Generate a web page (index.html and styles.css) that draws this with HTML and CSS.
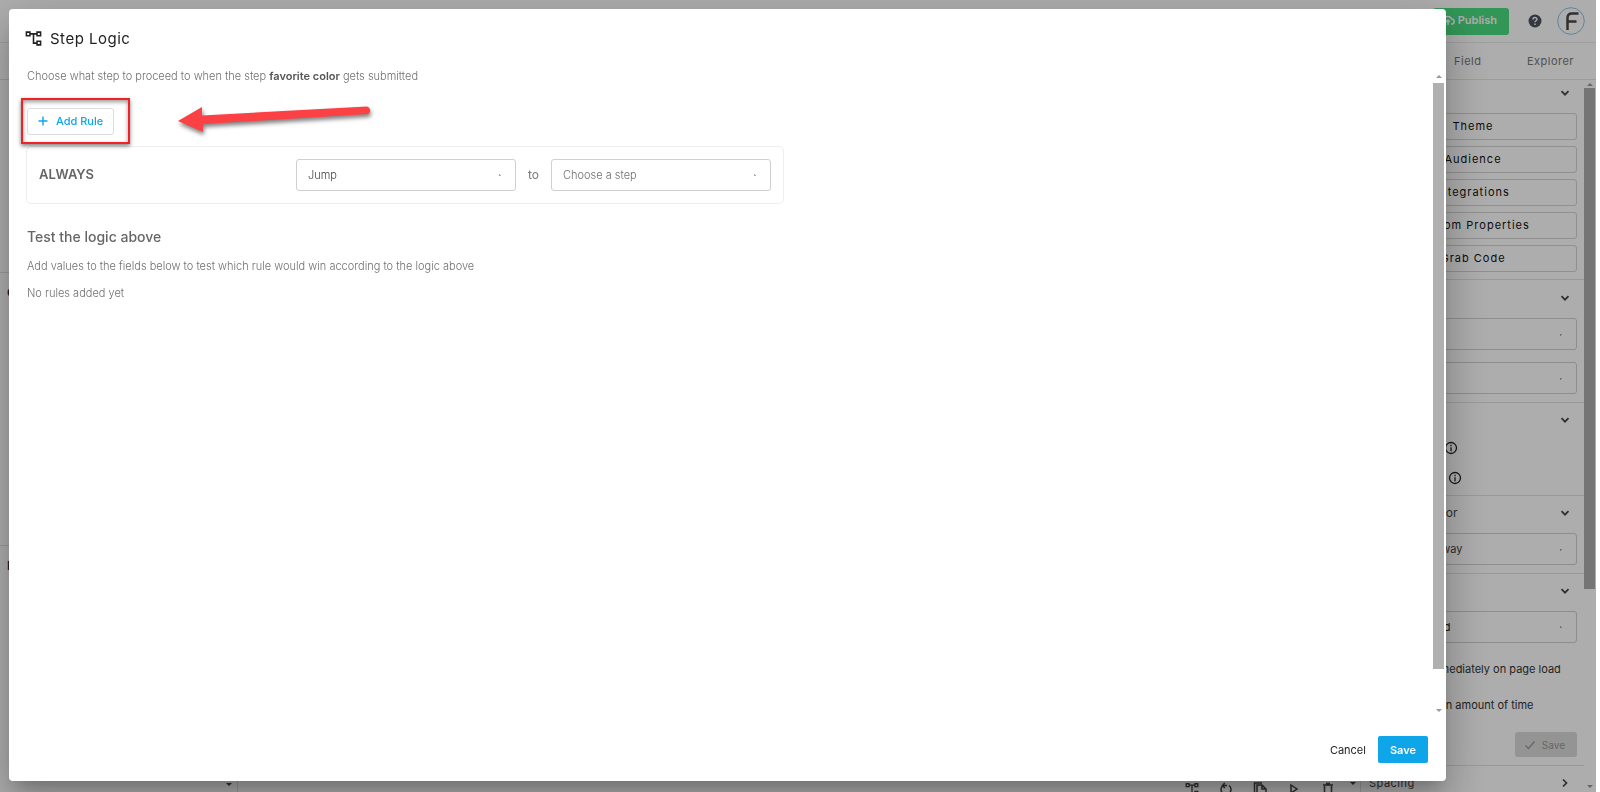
FILE: index.html
```html
<!DOCTYPE html>
<html lang="en">
<head>
<meta charset="utf-8">
<title>Step Logic</title>
<link rel="stylesheet" href="styles.css">
</head>
<body>
<svg class="sprite" aria-hidden="true">
  <symbol id="tree" viewBox="0 0 24 24"><path fill="none" stroke="currentColor" stroke-width="2.2" d="M2 3h5v5H2zM17 3h5v5h-5zM17 16h5v5h-5zM7 5.500h10M12 5.500v13h5"/></symbol>
  <symbol id="down" viewBox="0 0 12 12"><path fill="none" stroke="currentColor" stroke-width="1.700" d="M2.500 4.200l3.500 3.500 3.500-3.500"/></symbol>
  <symbol id="right" viewBox="0 0 12 12"><path fill="none" stroke="currentColor" stroke-width="1.700" d="M4 2.500l3.500 3.500L4 9.500"/></symbol>
  <symbol id="info" viewBox="0 0 14 14"><circle cx="7" cy="7" r="5.500" fill="none" stroke="currentColor" stroke-width="1.300"/><path stroke="currentColor" stroke-width="1.300" d="M7 6.300v4M7 3.800v1.400"/></symbol>
</svg>

<div class="app">
  <header class="topbar">
    <button class="publish" type="button">
      <svg width="14" height="12" viewBox="0 0 14 12"><path fill="none" stroke="currentColor" stroke-width="1.500" d="M4 10H3.500a2.500 2.500 0 0 1-.2-5A3.800 3.800 0 0 1 10.500 5a2.500 2.500 0 0 1 .3 5H10M7 11V6M5 8l2-2 2 2"/></svg>
      Publish
    </button>
    <svg class="help" width="14" height="14" viewBox="0 0 14 14"><circle cx="7" cy="7" r="6.500" fill="#4e5160"/><path fill="none" stroke="#fff" stroke-width="1.400" d="M5 5.500c0-2.600 4-2.500 4-.2 0 1.500-2 1.500-2 3M7 9.600V11"/></svg>
    <svg class="avatar" width="28" height="28" viewBox="0 0 28 28"><circle cx="14" cy="14" r="13.300" fill="none" stroke="#8fc4e8"/><path fill="none" stroke="#484848" stroke-width="2.500" d="M21.500 6.500H15c-3 0-4.500 1.500-4.500 4.500v12M10.500 14.500h9"/></svg>
  </header>

  <div class="workspace">
    <main class="canvas">
      <section class="lane lane-head"></section>
      <section class="lane">
      </section>
      <section class="lane"><h3 class="lane-title">G</h3></section>
      <section class="lane lane-last"><h3 class="lane-title">N</h3></section>
      <footer class="strip">
        <div class="strip-left"><i class="tri tri-down"></i></div>
        <div class="tools">
          <div class="tool-icons">
            <svg width="14" height="14"><use href="#tree"/></svg>
            <svg width="14" height="14" viewBox="0 0 14 14"><path fill="none" stroke="currentColor" stroke-width="1.500" d="M4 3.500a5 5 0 1 0 6 0M4 3.500h4M5.800 1L3.500 3.500 5.800 6"/></svg>
            <svg width="14" height="14" viewBox="0 0 14 14"><path fill="none" stroke="currentColor" stroke-width="1.500" d="M4 3h5l4 4v7H4zM9 3v4h4M1.500 12V1H9"/></svg>
            <svg width="14" height="14" viewBox="0 0 14 14"><path fill="none" stroke="currentColor" stroke-width="1.500" d="M4 3l6 4-6 4z"/></svg>
            <svg width="14" height="14" viewBox="0 0 14 14"><path fill="none" stroke="currentColor" stroke-width="1.500" d="M3.500 4v9h7V4M2 3h10M5 1.500h4"/></svg>
          </div>
          <i class="tri tri-down"></i>
        </div>
      </footer>
    </main>

    <aside class="sidebar">
      <nav class="tabs"><a class="tab" href="#">Step</a><a class="tab" href="#">Field</a><a class="tab" href="#">Explorer</a></nav>
      <div class="side-scroll">
        <div class="sections">
          <section class="section">
            <h4 class="section-head">Options<svg width="12" height="12"><use href="#down"/></svg></h4>
            <div class="stack">
              <button class="wide" type="button">Theme</button>
              <button class="wide" type="button">Audience</button>
              <button class="wide" type="button">Integrations</button>
              <button class="wide" type="button">Custom Properties</button>
              <button class="wide" type="button">Grab Code</button>
            </div>
          </section>
          <section class="section">
            <h4 class="section-head">Type<svg width="12" height="12"><use href="#down"/></svg></h4>
            <div class="stack stack-loose">
              <select class="select" aria-label="Type"><option></option></select>
              <select class="select" aria-label="Position"><option></option></select>
            </div>
          </section>
          <section class="section section-info">
            <h4 class="section-head">Settings<svg width="12" height="12"><use href="#down"/></svg></h4>
            <p class="info-row info-short"><svg width="14" height="14"><use href="#info"/></svg></p>
            <p class="info-row"><svg width="14" height="14"><use href="#info"/></svg></p>
          </section>
          <section class="section">
            <h4 class="section-head">Close Behavior<svg width="12" height="12"><use href="#down"/></svg></h4>
            <select class="select" aria-label="Close Behavior"><option>Hide right away</option></select>
          </section>
          <section class="section section-trigger">
            <h4 class="section-head">Trigger<svg width="12" height="12"><use href="#down"/></svg></h4>
            <select class="select" aria-label="Trigger"><option>On page load</option></select>
            <label class="radio"><input type="radio" name="when" checked>Immediately on page load</label>
            <label class="radio"><input type="radio" name="when">In an amount of time</label>
            <button class="side-save" type="button" disabled><svg width="12" height="12" viewBox="0 0 12 12"><path fill="none" stroke="currentColor" stroke-width="1.300" d="M1.500 6.500l3 3 6-7"/></svg>Save</button>
          </section>
          <section class="section section-spacing">
            <h4 class="section-head">Spacing<svg width="12" height="12"><use href="#right"/></svg></h4>
          </section>
        </div>
        <div class="bar bar-dark"><i class="tri tri-up"></i><i class="thumb"></i><i class="tri tri-down"></i></div>
      </div>
    </aside>
  </div>
</div>

<div class="scrim"></div>

<div class="modal" role="dialog" aria-labelledby="title">
  <header class="modal-head">
    <svg width="17" height="17"><use href="#tree"/></svg>
    <h1 class="modal-title" id="title">Step Logic</h1>
  </header>
  <div class="modal-body">
    <div class="content">
      <p class="text">Choose what step to proceed to when the step <strong>favorite color</strong> gets submitted</p>
      <div class="callout">
        <button class="add-rule" type="button"><svg width="10" height="10" viewBox="0 0 10 10"><path stroke="currentColor" stroke-width="1.400" d="M5 0.500v9M.5 5h9"/></svg>Add Rule</button>
        <i class="callout-box"></i>
        <svg class="callout-arrow" width="210" height="44" viewBox="0 0 210 44"><path fill="#fb4143" d="M7 19L31 5V13.500L196 4.500A4 4 0 0 1 197 12L32 22V30z"/></svg>
      </div>
      <div class="rule">
        <span class="rule-name">ALWAYS</span>
        <select class="select" aria-label="Action"><option>Jump</option></select>
        <span class="rule-to">to</span>
        <select class="select select-empty" aria-label="Step"><option>Choose a step</option></select>
      </div>
      <h2 class="subtitle">Test the logic above</h2>
      <p class="text">Add values to the fields below to test which rule would win according to the logic above</p>
      <p class="text text-next">No rules added yet</p>
    </div>
    <div class="bar bar-light"><i class="tri tri-up"></i><i class="thumb"></i><i class="tri tri-down"></i></div>
  </div>
  <footer class="modal-foot">
    <button class="cancel" type="button">Cancel</button>
    <button class="save" type="button">Save</button>
  </footer>
</div>
</body>
</html>
```
FILE: styles.css
```css
* { box-sizing: border-box; }
html, body { height: 100%; }
body {
  margin: 0;
  overflow: hidden;
  background: #fff;
  color: #222;
  font-family: Inter, "Liberation Sans", sans-serif;
  font-size: 11px;
}
h1, h2, h3, h4, p { margin: 0; font-weight: 400; }
button, select, input { font: inherit; color: inherit; margin: 0; }
svg { display: block; flex: none; }
.sprite { position: absolute; width: 0; height: 0; }

/* page behind the dialog */
.app { display: flex; flex-direction: column; height: 100vh; margin-right: 4px; overflow: hidden; }
.topbar { display: flex; flex: none; align-items: center; height: 43px; padding: 0 11px 0 0; justify-content: flex-end; border-bottom: 1px solid #eaeaea; }
.publish { display: flex; align-items: center; gap: 3px; height: 27px; padding: 0 12px 2px 8px; margin-right: 19px; border: 0; border-radius: 3px; background: #4ade80; color: #fff; font-weight: 600; }
.help { margin-right: 15px; }
.workspace { display: flex; flex: 1; min-height: 0; }
.canvas { display: flex; flex: 1; flex-direction: column; min-width: 0; }
.lane { flex: none; height: 273px; padding: 12px 0 0 7px; border-bottom: 1px solid #e2e2e2; }
.lane-head { height: 37px; }
.lane-head + .lane { height: 193px; }
.lane-last { flex: 1; border: 0; }
.lane-title { font-size: 12px; font-weight: 600; }
.strip { display: flex; flex: none; height: 16px; color: #444; }
.strip-left { display: flex; justify-content: flex-end; width: 238px; padding: 7px 5px 0 0; border-right: 1px solid #ddd; }
.tools { display: flex; flex: 1; justify-content: flex-end; gap: 15px; padding: 6px 4px 0 0; overflow: hidden; }
.tool-icons { display: flex; gap: 20px; }

.sidebar { display: flex; flex: none; flex-direction: column; width: 236px; border-left: 1px solid #e2e2e2; }
.tabs { display: flex; flex: none; align-items: center; justify-content: space-between; height: 37px; padding: 0 22px 1px; border-bottom: 1px solid #e6e6e6; }
.tab { color: #777; text-decoration: none; letter-spacing: .5px; }
.side-scroll { display: flex; flex: 1; min-height: 0; }
.sections { flex: 1; min-width: 0; overflow: hidden; }
.section { padding: 0 7px 8px 8px; border-bottom: 1px solid #e2e2e2; }
.section-head { display: flex; align-items: center; justify-content: space-between; height: 38px; padding: 0 6px 3px 3px; font-size: 12px; color: #444; }
.section:first-child .section-head { height: 33px; padding-bottom: 7px; }
.section:first-child { padding-bottom: 7px; }
.section-spacing .section-head { padding: 0 6px 2px 0; font-size: 11px; letter-spacing: .5px; }
.stack { display: flex; flex-direction: column; gap: 6px; }
.stack-loose { gap: 12px; }
.wide { height: 27px; border: 1px solid #d4d4d4; border-radius: 3px; padding-bottom: 3px; background: transparent; letter-spacing: 1px; color: #111; }
.select { width: 100%; height: 32px; padding: 0 11px 1px; border: 1px solid #d0d0d0; border-radius: 3px; appearance: none; color: #444;
  background: radial-gradient(circle, #aaa 1px, transparent 1px) right 14px center / 3px 3px no-repeat; }
.info-row { display: flex; justify-content: flex-end; height: 30px; padding: 1px 115px 0 0; color: #222; }
.info-short { padding-right: 119px; }
.section-info { padding-bottom: 0; height: 94px; }
.section-info, .section-info ~ .section { margin-top: -1px; }
.section-trigger { padding-bottom: 8px; }
.radio { display: flex; align-items: center; gap: 8px; height: 36px; padding-left: 37px; color: #333; }
.select + .radio { margin-top: 8px; }
.side-save { display: flex; align-items: center; justify-content: space-between; width: 62px; height: 25px; margin: 9px 0 0 auto; padding: 0 12px 0 9px; border: 0; border-radius: 3px; background: #dadada; color: #999; font-size: 10px; }
.section-trigger .select { color: #222; }

.scrim { position: fixed; inset: 0 4px 0 0; background: rgba(0, 0, 0, .32); }

/* scroll bars */
.bar { display: flex; flex: none; flex-direction: column; align-items: center; width: 12px; padding: 3px 1px 4px 0; }
.thumb { width: 11px; margin-top: 2px; }
.tri { border: 3px solid transparent; }
.tri-up { border-top: 0; border-bottom-color: currentColor; }
.tri-down { height: 3px; border-bottom: 0; border-top-color: currentColor; }
.bar .tri-down { margin-top: auto; }
.bar-dark { color: #999; }
.bar-dark .thumb { height: 71%; background: #adadad; }
.bar-light { width: 13px; padding: 4px 2px 4px 0; color: #999; }
.bar-light .thumb { height: 92%; margin-top: 5px; background: #b0b0b0; }

/* dialog */
.modal {
  position: fixed;
  inset: 9px 154px 11px 9px;
  display: flex;
  flex-direction: column;
  border-radius: 4px;
  background: #fff;
  box-shadow: 0 11px 15px -7px rgba(0, 0, 0, .2), 0 24px 38px 3px rgba(0, 0, 0, .14), 0 9px 46px 8px rgba(0, 0, 0, .12);
}
.modal-head { display: flex; align-items: center; gap: 8px; height: 62px; padding: 0 16px 3px; flex: none; color: #222; }
.modal-title { font-size: 15px; letter-spacing: .5px; }
.modal-body { display: flex; flex: 1; min-height: 0; }
.content { flex: 1; padding: 0 17px; }
.text { padding-left: 1px; font-weight: 300; line-height: 16px; color: #707070; }
.content > .text:first-child { line-height: 11px; }
.text strong { font-weight: 600; color: #555; }
.callout { position: relative; width: fit-content; margin: 26px 0 11px 1px; }
.add-rule { display: flex; align-items: center; gap: 8px; height: 27px; padding: 0 10px 1px; border: 1px solid #ddd; border-radius: 3px; background: #fff; color: #0ea5e9; font-weight: 500; }
.callout-box { position: absolute; inset: -10px -16px -9px -6px; border: 2px solid #f02226; box-shadow: 0 2px 4px rgba(0, 0, 0, .5), inset 0 2px 4px rgba(0, 0, 0, .4); pointer-events: none; }
.callout-arrow { position: absolute; left: 144px; top: -6px; filter: drop-shadow(1px 3px 2px rgba(0, 0, 0, .5)); }
.rule { display: grid; grid-template-columns: 1fr 220px auto 220px; align-items: center; gap: 12px; max-width: 758px; padding: 12px; border: 1px solid #eee; border-radius: 5px; }
.rule-name { padding-bottom: 2px; font-size: 13px; font-weight: 600; color: #666; }
.rule-to { padding-bottom: 2px; font-size: 12px; color: #777; }
.rule .select { font-weight: 300; }
.rule .select-empty { color: #707070; }
.subtitle { margin: 24px 0 12px 1px; font-size: 14px; line-height: 18px; font-weight: 500; color: #666; }
.text-next { margin-top: 11px; }
.modal-foot { display: flex; flex: none; align-items: center; justify-content: flex-end; gap: 12px; height: 65px; padding: 2px 18px 0; }
.cancel { padding: 0; border: 0; background: none; }
.save { height: 27px; padding: 0 12px; border: 0; border-radius: 2px; background: #0ea5e9; color: #fff; font-weight: 600; }
```
